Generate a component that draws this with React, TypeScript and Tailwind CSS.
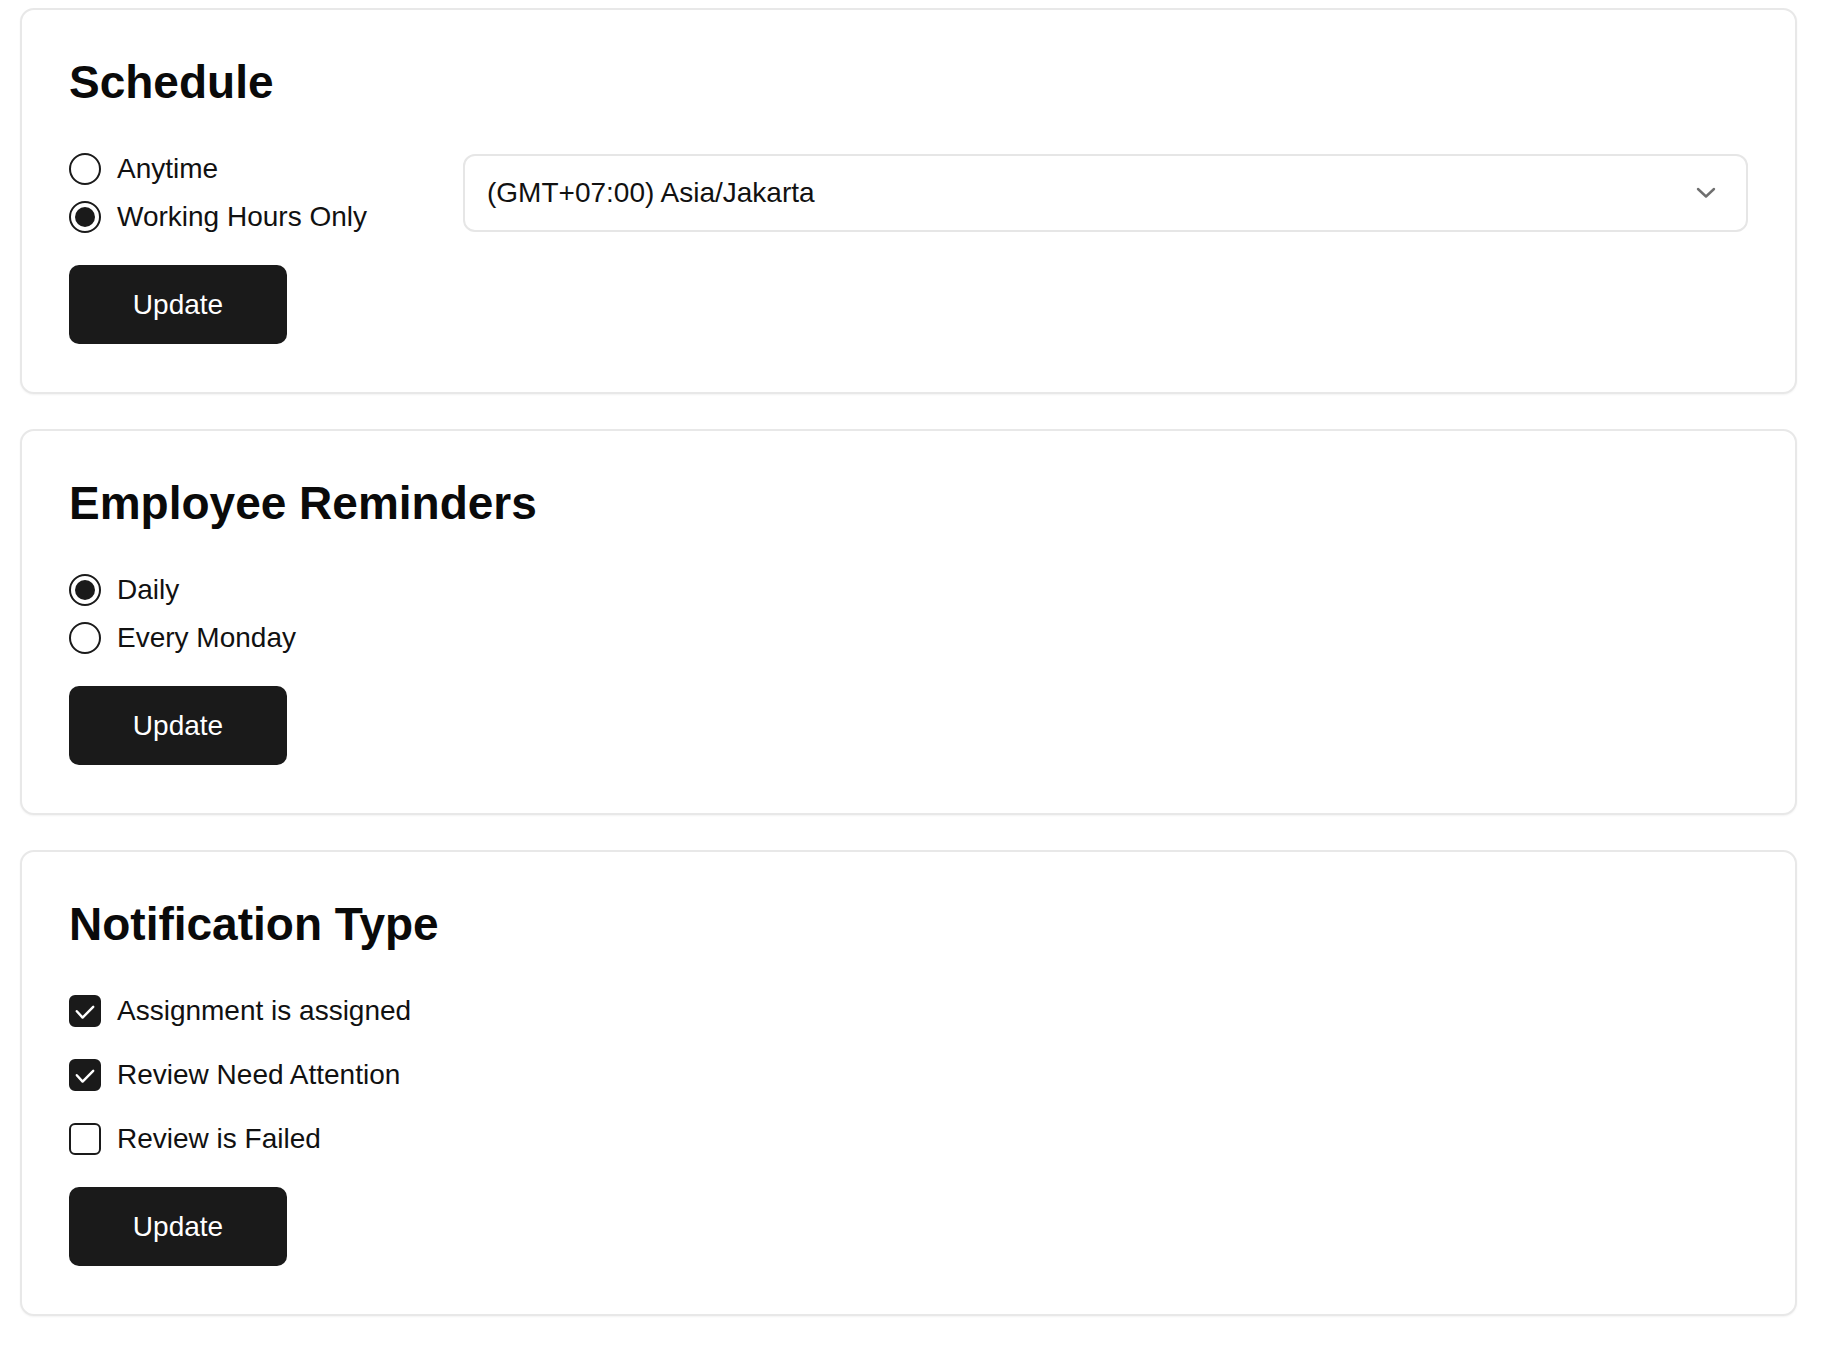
import React, { useState } from "react";

function Radio({ checked, label, onClick }: { checked: boolean; label: string; onClick: () => void }) {
  return (
    <button type="button" onClick={onClick} className="flex h-12 items-center gap-4 text-left">
      <span className="flex h-8 w-8 shrink-0 items-center justify-center rounded-full border-2 border-[#1a1a1a] bg-white">
        {checked && <span className="h-5 w-5 rounded-full bg-[#1a1a1a]" />}
      </span>
      <span className="text-[28px] text-[#111]">{label}</span>
    </button>
  );
}

function Checkbox({ checked, label, onClick }: { checked: boolean; label: string; onClick: () => void }) {
  return (
    <button type="button" onClick={onClick} className="flex h-12 items-center gap-4 text-left">
      <span
        className={
          checked
            ? "flex h-8 w-8 shrink-0 items-center justify-center rounded-[6px] border-2 border-[#1a1a1a] bg-[#1a1a1a]"
            : "flex h-8 w-8 shrink-0 items-center justify-center rounded-[6px] border-2 border-[#1a1a1a] bg-white"
        }
      >
        {checked && (
          <svg width="32" height="32" viewBox="0 0 32 32" fill="none" className="-m-[2px]">
            <path d="M7.8 16.2 L13.6 22.6 L24.2 11.8" stroke="#fff" strokeWidth="2.4" strokeLinecap="round" strokeLinejoin="round" />
          </svg>
        )}
      </span>
      <span className="text-[28px] text-[#111]">{label}</span>
    </button>
  );
}

function UpdateButton() {
  return (
    <button
      type="button"
      className="mt-6 flex h-[79px] w-[218px] items-center justify-center rounded-[10px] bg-[#1a1a1a] text-[28px] text-white"
    >
      Update
    </button>
  );
}

function Card({ title, children }: { title: string; children: React.ReactNode }) {
  return (
    <section className="rounded-[14px] border-2 border-[#e8e8e8] bg-white px-[47px] pt-[47px] pb-[48px] shadow-[0_1px_2px_rgba(0,0,0,0.05)]">
      <h2 className="text-[46px] leading-[51px] font-bold text-[#0a0a0a]">{title}</h2>
      <div className="mt-[37px]">{children}</div>
    </section>
  );
}

export default function App() {
  const [schedule, setSchedule] = useState<"any" | "work">("work");
  const [reminder, setReminder] = useState<"daily" | "monday">("daily");
  const [types, setTypes] = useState({ assigned: true, attention: true, failed: false });

  return (
    <div className="min-h-screen bg-white pt-2 pl-5 font-['Liberation_Sans',Arial,sans-serif] text-[#111]">
      <div className="flex w-[1777px] flex-col gap-[35px]">
        <Card title="Schedule">
          <div className="flex items-center gap-12">
            <div className="flex w-[346px] shrink-0 flex-col">
              <Radio checked={schedule === "any"} label="Anytime" onClick={() => setSchedule("any")} />
              <Radio checked={schedule === "work"} label="Working Hours Only" onClick={() => setSchedule("work")} />
            </div>
            <div className="flex h-[78px] flex-1 items-center justify-between rounded-[12px] border-2 border-[#e6e6e6] bg-white pr-[30px] pl-[22px]">
              <span className="text-[28px] text-[#111]">(GMT+07:00) Asia/Jakarta</span>
              <svg width="20" height="12" viewBox="0 0 20 12" fill="none">
                <path d="M2 2 L10 9.5 L18 2" stroke="#6f6f6f" strokeWidth="2.4" strokeLinecap="round" strokeLinejoin="round" />
              </svg>
            </div>
          </div>
          <UpdateButton />
        </Card>

        <Card title="Employee Reminders">
          <div className="flex flex-col">
            <Radio checked={reminder === "daily"} label="Daily" onClick={() => setReminder("daily")} />
            <Radio checked={reminder === "monday"} label="Every Monday" onClick={() => setReminder("monday")} />
          </div>
          <UpdateButton />
        </Card>

        <Card title="Notification Type">
          <div className="flex flex-col gap-4">
            <Checkbox
              checked={types.assigned}
              label="Assignment is assigned"
              onClick={() => setTypes({ ...types, assigned: !types.assigned })}
            />
            <Checkbox
              checked={types.attention}
              label="Review Need Attention"
              onClick={() => setTypes({ ...types, attention: !types.attention })}
            />
            <Checkbox
              checked={types.failed}
              label="Review is Failed"
              onClick={() => setTypes({ ...types, failed: !types.failed })}
            />
          </div>
          <UpdateButton />
        </Card>
      </div>
    </div>
  );
}
